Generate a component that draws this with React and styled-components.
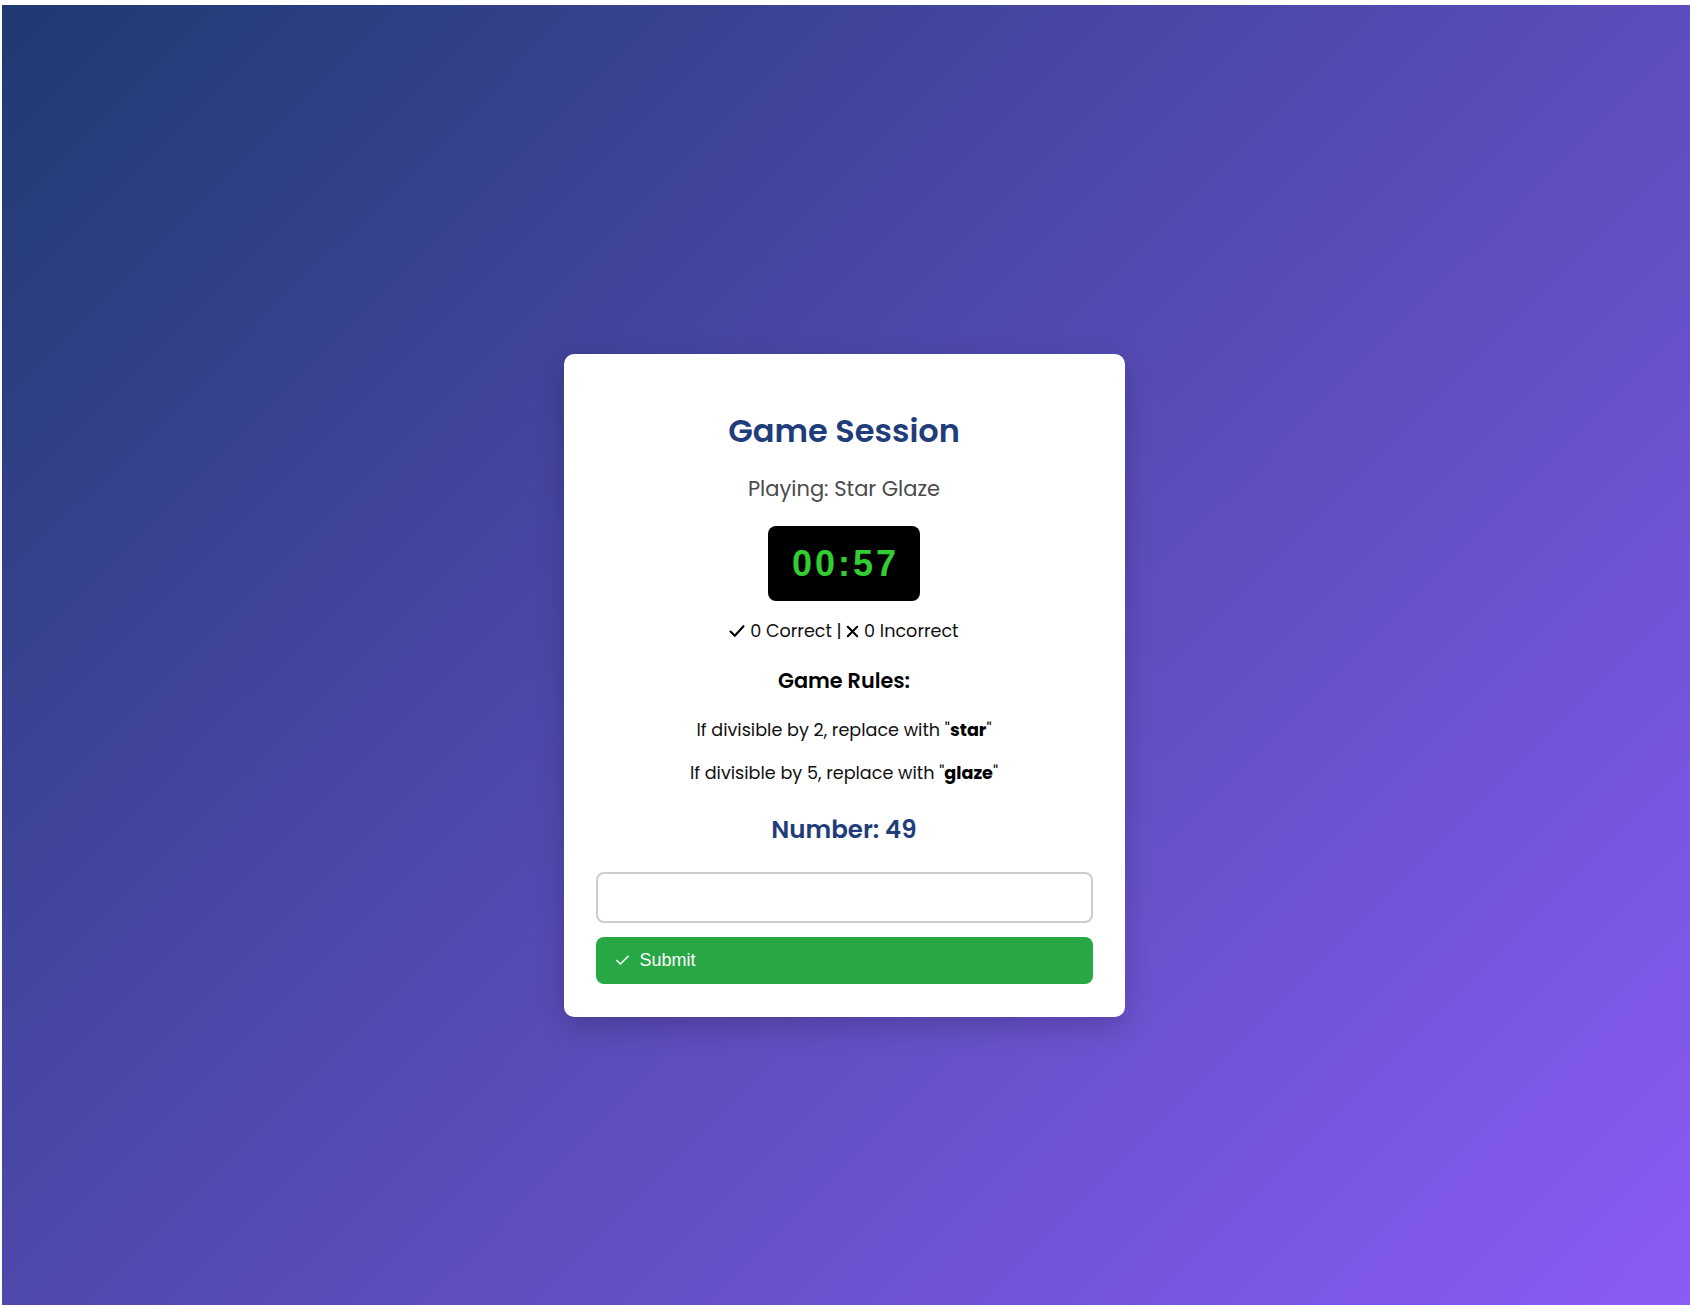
import React, { useState } from 'react';
import styled, { createGlobalStyle } from 'styled-components';
import { Check } from 'lucide-react';

const GlobalStyle = createGlobalStyle`
    html, body {
        margin: 0;
        padding: 0;
        background: #ffffff;
    }
    * {
        box-sizing: border-box;
    }
`;

const Page = styled.div`
    display: flex;
    flex-direction: column;
    align-items: center;
    min-height: 1300px;
    margin: 5px 0 0 2px;
    padding: 349px 4px 0 0;
    background: linear-gradient(135deg, #1f3a72 0%, #8b5cf6 100%);
    font-family: "Poppins", "Inter", "Noto Sans", sans-serif;
`;

const Card = styled.div`
    display: flex;
    flex-direction: column;
    align-items: center;
    width: 561px;
    padding: 32px 32px 33px;
    border-radius: 10px;
    background-color: #ffffff;
    box-shadow: 0 10px 30px rgba(0, 0, 0, 0.2);
    text-align: center;
`;

const Title = styled.h2`
    margin: 25px 0 0;
    font-size: 32px;
    line-height: 40px;
    font-weight: 600;
    color: #1f3d7a;
`;

const Subtitle = styled.p`
    margin: 26px 0 0;
    font-size: 21px;
    line-height: 24px;
    color: #4a4a4a;
`;

const Timer = styled.div`
    display: flex;
    align-items: center;
    justify-content: center;
    width: 152px;
    height: 75px;
    margin-top: 25px;
    border-radius: 8px;
    background-color: #000000;
    color: #32cd32;
    font-family: "Liberation Sans", Arial, sans-serif;
    font-weight: bold;
    font-size: 36px;
    letter-spacing: 3px;
    padding-left: 3px;
`;

const Score = styled.p`
    margin: 18px 0 0;
    font-size: 17.6px;
    line-height: 24px;
    color: #111111;
`;

const Mark = styled.span`
    display: inline-block;
    vertical-align: -1px;
    line-height: 0;
    color: #000000;
`;

const RulesTitle = styled.h3`
    margin: 25px 0 0;
    font-size: 20.8px;
    line-height: 26px;
    font-weight: 600;
    color: #000000;
`;

const Rule = styled.p`
    margin: ${(p) => (p.$first ? '24px' : '19px')} 0 0;
    font-size: 17.6px;
    line-height: 24px;
    color: #111111;

    b {
        font-weight: 700;
        color: #000000;
    }
`;

const NumberLabel = styled.h3`
    margin: 29px 0 0;
    font-size: 24.5px;
    line-height: 32px;
    font-weight: 600;
    color: #1f3d7a;
`;

const AnswerInput = styled.input`
    width: 100%;
    height: 51px;
    margin-top: 26px;
    padding: 0 14px;
    border: 2px solid #cccccc;
    border-radius: 8px;
    font-size: 16px;
    outline: none;
`;

const SubmitButton = styled.button`
    display: flex;
    align-items: center;
    gap: 9px;
    width: 100%;
    height: 47px;
    margin-top: 14px;
    padding: 0 18px;
    border: none;
    border-radius: 8px;
    background-color: #28a745;
    color: #ffffff;
    font-family: "Liberation Sans", Arial, sans-serif;
    font-size: 18px;
    cursor: pointer;
`;

function TickIcon() {
    return (
        <svg width="16" height="14" viewBox="0 0 16 14" fill="none">
            <path d="M1.5 7.5 L5.8 11.8 L14.5 2.2" stroke="#000" strokeWidth="2.1" strokeLinecap="round" strokeLinejoin="round" />
        </svg>
    );
}

function CrossIcon() {
    return (
        <svg width="13" height="13" viewBox="0 0 13 13" fill="none">
            <path d="M1.8 1.8 L11.2 11.2 M11.2 1.8 L1.8 11.2" stroke="#000" strokeWidth="2.1" strokeLinecap="round" />
        </svg>
    );
}

function App() {
    const [answer, setAnswer] = useState('');

    return (
        <>
            <GlobalStyle />
            <Page>
                <Card>
                    <Title>Game Session</Title>
                    <Subtitle>Playing: Star Glaze</Subtitle>
                    <Timer>00:57</Timer>
                    <Score>
                        <Mark><TickIcon /></Mark> 0 Correct | <Mark><CrossIcon /></Mark> 0 Incorrect
                    </Score>
                    <RulesTitle>Game Rules:</RulesTitle>
                    <Rule $first>If divisible by 2, replace with "<b>star</b>"</Rule>
                    <Rule>If divisible by 5, replace with "<b>glaze</b>"</Rule>
                    <NumberLabel>Number: 49</NumberLabel>
                    <AnswerInput value={answer} onChange={(e) => setAnswer(e.target.value)} />
                    <SubmitButton>
                        <Check size={17} strokeWidth={2.2} />
                        Submit
                    </SubmitButton>
                </Card>
            </Page>
        </>
    );
}

export default App;
